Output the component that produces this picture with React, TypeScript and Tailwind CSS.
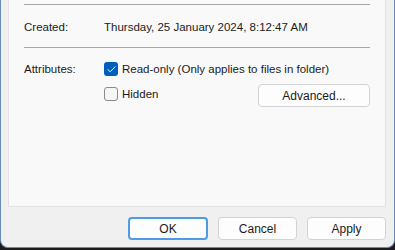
import { Check } from 'lucide-react'

const font = { fontFamily: '"Liberation Sans", Arial, sans-serif' }

function Checkbox({ checked }: { checked?: boolean }) {
  return checked ? (
    <span className="flex size-[14px] shrink-0 items-center justify-center rounded-[3px] bg-[#005fb8]">
      <Check className="size-[11px] text-white" strokeWidth={2} aria-hidden />
    </span>
  ) : (
    <span className="size-[14px] shrink-0 rounded-[3px] border border-[#8b8b8b] bg-[#f6f6f6]" />
  )
}

function Button({ label, primary }: { label: string; primary?: boolean }) {
  return (
    <button
      type="button"
      className={
        primary
          ? 'h-[23px] w-[80px] rounded-[4px] border-2 border-[#4c9be8] bg-[#fdfdfd] text-[12px] text-[#1b1b1b]'
          : 'h-[23px] w-[79px] rounded-[4px] border border-[#d3d3d3] bg-[#fdfdfd] text-[12px] text-[#1b1b1b]'
      }
    >
      {label}
    </button>
  )
}

export default function App() {
  return (
    <div className="h-[250px] w-[395px] bg-[#1c1c1c]" style={font}>
      <div className="flex h-[248px] flex-col rounded-b-[8px] border-x border-b border-[#6a8cbb] bg-[#f0f0f0] pl-[7px] pr-[8px]">
        <div className="h-[207px] border-x border-b border-[#e2e2e2] bg-[#f9f9f9] px-[15px] pt-[4px] text-[11.5px] leading-[16px] text-[#1b1b1b]">
          <div className="h-px bg-[#a8a8a8]" />
          <div className="mt-[14px] flex">
            <span className="w-[80px]">Created:</span>
            <span>Thursday, 25 January 2024, 8:12:47 AM</span>
          </div>
          <div className="mt-[12px] h-px bg-[#a8a8a8]" />
          <div className="mt-[13px] flex">
            <span className="w-[80px]">Attributes:</span>
            <div className="flex flex-1 flex-col">
              <label className="flex items-center gap-[4px]">
                <Checkbox checked />
                <span>Read-only (Only applies to files in folder)</span>
              </label>
              <div className="mt-[7px] flex items-start justify-between">
                <label className="mt-[2px] flex items-center gap-[4px]">
                  <Checkbox />
                  <span>Hidden</span>
                </label>
                <button
                  type="button"
                  className="h-[23px] w-[112px] rounded-[4px] border border-[#d3d3d3] bg-[#fdfdfd] text-[12px]"
                >
                  Advanced...
                </button>
              </div>
            </div>
          </div>
        </div>
        <div className="mt-[10px] flex justify-end gap-[10px]">
          <Button label="OK" primary />
          <Button label="Cancel" />
          <Button label="Apply" />
        </div>
      </div>
    </div>
  )
}
